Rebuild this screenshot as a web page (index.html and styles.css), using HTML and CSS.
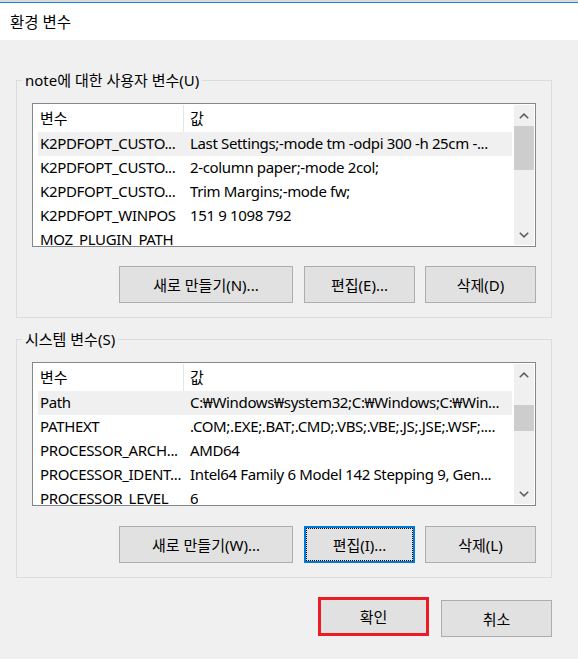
FILE: index.html
```html
<!DOCTYPE html>
<html lang="ko">
<head>
<meta charset="utf-8">
<title>환경 변수</title>
<link rel="stylesheet" href="styles.css">
</head>
<body>
<div class="titlebar"><div class="title">환경 변수</div></div>
<div class="dialog">
  <fieldset class="group">
    <legend>note에 대한 사용자 변수(U)</legend>
    <div class="group-inner">
      <div class="listbox">
        <div class="list-content">
          <div class="header"><div class="hcol1">변수</div><div class="hcol2">값</div></div>
          <div class="row sel"><span class="c1">K2PDFOPT_CUSTO...</span><span class="c2">Last Settings;-mode tm -odpi 300 -h 25cm -...</span></div>
          <div class="row"><span class="c1">K2PDFOPT_CUSTO...</span><span class="c2">2-column paper;-mode 2col;</span></div>
          <div class="row"><span class="c1">K2PDFOPT_CUSTO...</span><span class="c2">Trim Margins;-mode fw;</span></div>
          <div class="row"><span class="c1">K2PDFOPT_WINPOS</span><span class="c2">151 9 1098 792</span></div>
          <div class="row"><span class="c1">MOZ_PLUGIN_PATH</span><span class="c2"></span></div>
        </div>
        <div class="scrollbar">
          <div class="arrow"><svg width="10" height="6" viewBox="0 0 10 6"><polyline points="0.8,5.3 5,1.1 9.2,5.3" fill="none" stroke="#606060" stroke-width="1.6"/></svg></div>
          <div class="track"><div class="thumb thumb-top"></div></div>
          <div class="arrow"><svg width="10" height="6" viewBox="0 0 10 6"><polyline points="0.8,0.7 5,4.9 9.2,0.7" fill="none" stroke="#606060" stroke-width="1.6"/></svg></div>
        </div>
      </div>
      <div class="btnrow">
        <button class="btn wide">새로 만들기(N)...</button>
        <button class="btn">편집(E)...</button>
        <button class="btn">삭제(D)</button>
      </div>
    </div>
  </fieldset>

  <fieldset class="group second">
    <legend>시스템 변수(S)</legend>
    <div class="group-inner">
      <div class="listbox">
        <div class="list-content">
          <div class="header"><div class="hcol1">변수</div><div class="hcol2">값</div></div>
          <div class="row sel"><span class="c1">Path</span><span class="c2">C:₩Windows₩system32;C:₩Windows;C:₩Win...</span></div>
          <div class="row"><span class="c1">PATHEXT</span><span class="c2">.COM;.EXE;.BAT;.CMD;.VBS;.VBE;.JS;.JSE;.WSF;....</span></div>
          <div class="row"><span class="c1">PROCESSOR_ARCH...</span><span class="c2">AMD64</span></div>
          <div class="row"><span class="c1">PROCESSOR_IDENT...</span><span class="c2">Intel64 Family 6 Model 142 Stepping 9, Gen...</span></div>
          <div class="row"><span class="c1">PROCESSOR_LEVEL</span><span class="c2">6</span></div>
        </div>
        <div class="scrollbar">
          <div class="arrow"><svg width="10" height="6" viewBox="0 0 10 6"><polyline points="0.8,5.3 5,1.1 9.2,5.3" fill="none" stroke="#606060" stroke-width="1.6"/></svg></div>
          <div class="track"><div class="thumb thumb-mid"></div></div>
          <div class="arrow"><svg width="10" height="6" viewBox="0 0 10 6"><polyline points="0.8,0.7 5,4.9 9.2,0.7" fill="none" stroke="#606060" stroke-width="1.6"/></svg></div>
        </div>
      </div>
      <div class="btnrow lower">
        <button class="btn wide">새로 만들기(W)...</button>
        <button class="btn focused"><span class="focus-ring">편집(I)...</span></button>
        <button class="btn">삭제(L)</button>
      </div>
    </div>
  </fieldset>

  <div class="dlgbtns">
    <button class="btn ok">확인</button>
    <button class="btn cancel">취소</button>
  </div>
</div>
</body>
</html>
```

FILE: styles.css
```css
* { box-sizing: border-box; }

html, body {
  margin: 0;
  padding: 0;
}

body {
  width: 578px;
  height: 659px;
  overflow: hidden;
  background: #f0f0f0;
  font-family: "Noto Sans", "Noto Sans CJK KR", sans-serif;
  font-size: 15px;
  color: #000;
}

.titlebar {
  background: #fff;
  border-top: 2px solid #dadada;
}

.title {
  height: 38px;
  border-top: 1px solid #1883d7;
  display: flex;
  align-items: center;
  padding-left: 10px;
  line-height: 20px;
  font-size: 15.5px;
}

.dialog {
  padding: 30px 26px 0 16px;
}

.group {
  margin: 0;
  padding: 13px 5px 14px 5px;
  border: 1px solid #dcdcdc;
  min-inline-size: 0;
}

.group.second {
  margin-top: 11px;
}

.group legend {
  padding: 0 3px;
  line-height: 20px;
  height: 20px;
}

.group-inner {
  padding: 0 10px;
}

.listbox {
  height: 144px;
  border: 1px solid #828790;
  background: #fff;
  padding: 1px;
  display: flex;
}

.list-content {
  flex: 1;
  overflow: hidden;
  min-width: 0;
}

.header {
  display: flex;
  height: 27px;
  line-height: 26px;
}

.hcol1 {
  width: 150px;
  padding-left: 6px;
  border-right: 1px solid #e5e5e5;
}

.hcol2 {
  padding-left: 6px;
}

.row {
  display: flex;
  height: 24px;
  line-height: 23px;
  margin: 0 2px 0 4px;
  white-space: nowrap;
  letter-spacing: -0.35px;
}

.row.sel {
  background: #f0f0f0;
}

.c1 {
  width: 146px;
  flex: none;
  padding-left: 2px;
  overflow: hidden;
}

.c2 {
  padding-left: 6px;
  overflow: hidden;
}

.scrollbar {
  width: 20px;
  flex: none;
  background: #f0f0f0;
  display: flex;
  flex-direction: column;
}

.arrow {
  height: 21px;
  display: flex;
  align-items: center;
  justify-content: center;
  flex: none;
}

.track {
  flex: 1;
}

.thumb {
  background: #cdcdcd;
}

.thumb-top {
  height: 44px;
}

.thumb-mid {
  height: 26px;
  margin-top: 20px;
}

.btnrow {
  display: flex;
  justify-content: flex-end;
  gap: 10px;
  margin-top: 19px;
}

.btnrow.lower {
  margin-top: 20px;
}

.btn {
  font-family: inherit;
  font-size: 15px;
  color: #000;
  background: #e1e1e1;
  border: 1px solid #adadad;
  width: 111px;
  height: 37px;
  padding: 0;
  margin: 0;
  line-height: 20px;
  border-radius: 0;
}

.btn.wide {
  width: 174px;
  margin-right: 1px;
}

.btn.focused {
  border: 2px solid #0078d7;
  padding: 0;
  display: flex;
}

.focus-ring {
  flex: 1;
  display: flex;
  align-items: center;
  justify-content: center;
  border: 1px dotted #000;
}

.dlgbtns {
  display: flex;
  justify-content: flex-end;
  align-items: flex-start;
  gap: 12px;
  margin-top: 19px;
}

.btn.ok {
  border: 3px solid #ed1c24;
  height: 39px;
}

.btn.cancel {
  margin-top: 3px;
}
```
